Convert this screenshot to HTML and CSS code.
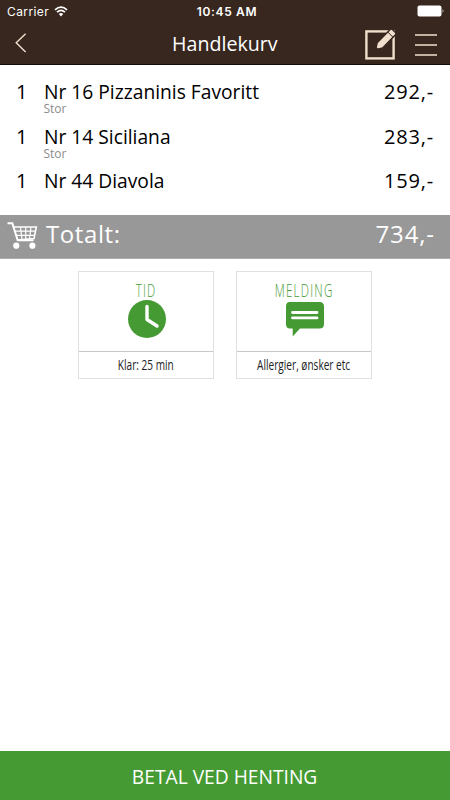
FILE: index.html
```html
<!DOCTYPE html>
<html lang="no">
<head>
    <meta charset="UTF-8">
    <meta name="viewport" content="width=device-width, initial-scale=1.0">
    <title>Handlekurv</title>
    <link rel="stylesheet" href="styles.css">
</head>
<body>
    <header class="top">
        <div class="status">
            <div class="carrier">
                <span>Carrier</span>
                <svg width="14" height="11" viewBox="0 0 14 11">
                    <path d="M1 3.8 Q7 -1.5 13 3.8 M3 6.1 Q7 2.6 11 6.1" fill="none" stroke="#fff" stroke-width="1.7"/>
                    <path d="M4.8 8 Q7 6.2 9.2 8 L7 10.4z" fill="#fff"/>
                </svg>
            </div>
            <div class="clock">10:45 AM</div>
            <div class="battery">
                <svg width="28" height="12" viewBox="0 0 28 12">
                    <rect x="0.5" y="0.5" width="24" height="11" rx="2" fill="#fff"/>
                    <path d="M25.7 4 q1.6 2 0 4z" fill="#fff"/>
                </svg>
            </div>
        </div>
        <nav class="nav">
            <a class="back">
                <svg width="12" height="20" viewBox="0 0 12 20">
                    <path d="M10.6 0.7 L1.2 9.8 L10.6 19" fill="none" stroke="#f0dfcd" stroke-width="1.4"/>
                </svg>
            </a>
            <h1 class="title"><span>Handlekurv</span></h1>
            <div class="tools">
                <svg width="32" height="33" viewBox="0 0 32 33">
                    <rect x="1.4" y="3.4" width="27.2" height="27" fill="none" stroke="#f0dfcd" stroke-width="2.4"/>
                    <path d="M10.6 21.8 L12.2 14.8 L25.2 1.6 Q26.3 0.6 27.4 1.6 L30.4 4.6 Q31.4 5.7 30.4 6.8 L17.6 20z" fill="#f0dfcd" stroke="#38271e" stroke-width="1.4"/>
                    <path d="M22.6 3.8 L28.4 9.6" stroke="#38271e" stroke-width="1"/>
                    <path d="M10.8 21.6 l0.6-2.6 l2 2z" fill="#38271e"/>
                </svg>
                <svg width="24" height="26" viewBox="0 0 24 26">
                    <path d="M0 4 H22 M0 14 H22 M0 24 H22" stroke="#f0dfcd" stroke-width="1.6"/>
                </svg>
            </div>
        </nav>
    </header>

    <ul class="items">
        <li class="item">
            <span class="count">1</span>
            <div class="info">
                <div class="name"><span>Nr 16 Pizzaninis Favoritt</span></div>
                <div class="size">Stor</div>
            </div>
            <span class="price">292,-</span>
        </li>
        <li class="item">
            <span class="count">1</span>
            <div class="info">
                <div class="name"><span>Nr 14 Siciliana</span></div>
                <div class="size">Stor</div>
            </div>
            <span class="price">283,-</span>
        </li>
        <li class="item">
            <span class="count">1</span>
            <div class="info">
                <div class="name"><span>Nr 44 Diavola</span></div>
            </div>
            <span class="price">159,-</span>
        </li>
    </ul>

    <div class="total">
        <svg width="31" height="27" viewBox="0 0 31 27" fill="none" stroke="#fff">
            <path d="M0.5 1.2 H5.3 L10.7 18.3 H26.5" stroke-width="2"/>
            <path d="M6.5 5 H29.3 L27 16.6 L10 18" stroke-width="1.6"/>
            <path d="M7.5 9.2 H28.5 M8.8 13.3 H27.5 M13.5 5 L15 17.5 M18.7 5 V17.5 M24 5 L22.5 17" stroke-width="1.2"/>
            <circle cx="9.3" cy="23.7" r="3.1" fill="#fff" stroke="none"/>
            <circle cx="25.4" cy="23.7" r="3.1" fill="#fff" stroke="none"/>
        </svg>
        <span class="label">Totalt:</span>
        <span class="sum">734,-</span>
    </div>

    <div class="cards">
        <div class="card">
            <div class="card-top">
                <h2><span>TID</span></h2>
                <svg width="40" height="40" viewBox="0 0 40 40">
                    <circle cx="21" cy="20" r="19" fill="#459a33"/>
                    <path d="M21 7.5 V20.5 L31 27" fill="none" stroke="#fff" stroke-width="3.4" stroke-linecap="round" stroke-linejoin="round"/>
                </svg>
            </div>
            <div class="card-text"><span>Klar: 25 min</span></div>
        </div>
        <div class="card">
            <div class="card-top">
                <h2><span>MELDING</span></h2>
                <svg width="40" height="40" viewBox="0 0 40 40">
                    <path d="M5.5 3 H35.5 Q40 3 40 7.5 V25 Q40 29.5 35.5 29.5 H16 L8.7 37.5 V29.5 H6 Q2 29.5 2 25 V7.5 Q2 3 5.5 3z" fill="#459a33"/>
                    <path d="M8.5 13.5 H33 M8.5 18.9 H33" stroke="#fff" stroke-width="2.8" stroke-linecap="round"/>
                </svg>
            </div>
            <div class="card-text"><span>Allergier, ønsker etc</span></div>
        </div>
    </div>

    <button class="pay"><span>BETAL VED HENTING</span></button>
</body>
</html>
```
FILE: styles.css
```css
* {
    box-sizing: border-box;
}
body {
    display: flex;
    flex-direction: column;
    height: 100vh;
    margin: 0;
    background-color: #fff;
    color: #000;
    font-family: "Open Sans", "Noto Sans", sans-serif;
}
span {
    display: inline-block;
    white-space: nowrap;
}
svg {
    display: block;
}
.top {
    height: 65px;
    background-color: #38271e;
    border-bottom: 1px solid #120b07;
    color: #fff;
}
.status {
    display: grid;
    grid-template-columns: 1fr auto 1fr;
    align-items: center;
    height: 22px;
    padding: 0 5px 0 7px;
    font-family: Inter, sans-serif;
    font-size: 12px;
}
.carrier {
    display: flex;
    align-items: center;
    gap: 5px;
    letter-spacing: 0.4px;
}
.clock {
    padding-left: 2px;
    font-weight: 600;
    letter-spacing: 0.65px;
}
.battery {
    justify-self: end;
}
.nav {
    display: grid;
    grid-template-columns: 85px 1fr 85px;
    align-items: center;
    height: 44px;
}
.back {
    padding: 0 0 3px 15px;
}
.title {
    margin: 0;
    font-size: 20px;
    font-weight: 400;
    line-height: 44px;
    text-align: center;
}
.title span {
    transform: scaleX(0.98);
}
.tools {
    display: flex;
    align-items: center;
    gap: 18px;
}
.items {
    height: 150px;
    margin: 0;
    padding: 15px 16px 0;
    list-style: none;
}
.item {
    display: flex;
    height: 44.6px;
    font-size: 20px;
    line-height: 24px;
}
.count {
    width: 27.5px;
}
.info {
    flex: 1;
}
.name {
    height: 23px;
}
.name span {
    transform: scaleX(0.961);
    transform-origin: left;
}
.size {
    color: #8c8c8c;
    font-size: 12px;
    line-height: 11px;
}
.price {
    font-weight: 500;
    letter-spacing: 0.8px;
}
.total {
    display: flex;
    align-items: center;
    height: 44px;
    padding: 0 15px 3px 7px;
    background-color: #989898;
    border-bottom: 1px solid #adadad;
    color: #fff;
    font-size: 24px;
    line-height: 38px;
}
.label {
    flex: 1;
    margin-left: 8px;
    padding-bottom: 2px;
    font-weight: 500;
    letter-spacing: 0.6px;
}
.sum {
    padding-bottom: 2px;
    letter-spacing: 0.9px;
}
.cards {
    display: flex;
    justify-content: center;
    gap: 22px;
    margin-top: 12px;
}
.card {
    width: 136px;
    height: 108px;
    border: 1px solid #e0e0e0;
}
.card-top {
    display: flex;
    flex-direction: column;
    align-items: center;
    height: 80px;
    padding-top: 8px;
    border-bottom: 1px solid #c8c8c8;
}
.card h2 {
    height: 19px;
    margin: 0;
    color: #459a33;
    font-size: 19px;
    font-weight: 300;
    line-height: 20px;
}
.card h2 span {
    letter-spacing: 2px;
    transform: scaleX(0.61);
}
.card-text {
    display: flex;
    justify-content: center;
    color: #222;
    font-size: 14px;
    line-height: 25px;
}
.card-text span {
    transform: scaleX(0.72);
}
.pay {
    height: 49px;
    margin-top: auto;
    padding: 2px 0 0;
    background-color: #459a33;
    border: 0;
    color: #fff;
    font-family: inherit;
    font-size: 20px;
}
.pay span {
    transform: scaleX(0.96);
}
```
